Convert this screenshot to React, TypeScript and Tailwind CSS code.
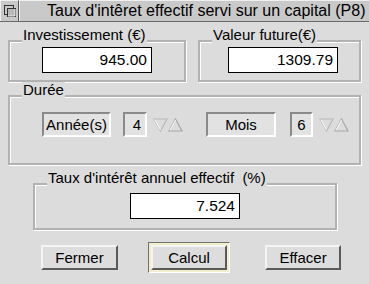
import React from 'react';

const font = { fontFamily: '"Liberation Sans", Arial, sans-serif' };

const Frame = ({ label, className, children }: { label: string; className: string; children: React.ReactNode }) => (
  <div className={`relative border-2 border-[#b2b2b2] shadow-[1px_1px_0_#fff,inset_1px_1px_0_#fff] ${className}`}>
    <span className="absolute -top-[15px] left-[12px] bg-[#dcdcdc] px-[1px] text-[15px] leading-[16px] text-black whitespace-pre">{label}</span>
    {children}
  </div>
);

const Field = ({ value, className = '' }: { value: string; className?: string }) => (
  <div className={`h-[26px] w-[110px] border border-black bg-white pr-[4px] text-right text-[15.5px] leading-[24px] text-black ${className}`}>
    {value}
  </div>
);

const Sunken = ({ text, className }: { text: string; className: string }) => (
  <div className={`h-[25px] border-2 border-t-[#8a8a8a] border-l-[#8a8a8a] border-b-white border-r-white bg-[#e2e2e2] text-center text-[15px] leading-[21px] text-black ${className}`}>
    {text}
  </div>
);

const Arrows = () => (
  <svg width="30" height="16" viewBox="0 0 30 16" className="ml-[6px]">
    <path d="M1 2 L14 2 L7.5 14 Z" fill="#dcdcdc" stroke="#b8b8b8" strokeWidth="1.2" />
    <path d="M1.8 2.6 L7.5 13" stroke="#fff" strokeWidth="1" />
    <path d="M16 14 L29 14 L22.5 2 Z" fill="#dcdcdc" stroke="#a8a8a8" strokeWidth="1.2" />
    <path d="M16.8 13.4 L22.5 3" stroke="#fff" strokeWidth="1" />
  </svg>
);

const Button = ({ label, className = '' }: { label: string; className?: string }) => (
  <div className={`h-[25px] border-2 border-t-[#f4f4f4] border-l-[#f4f4f4] border-b-[#5a5a5a] border-r-[#5a5a5a] bg-[#dddddd] text-center text-[15px] leading-[21px] text-black ${className}`}>
    {label}
  </div>
);

export default function App() {
  return (
    <div className="h-[284px] w-[369px] overflow-hidden bg-[#dcdcdc]" style={font}>
      <div className="flex h-[22px] border-b border-[#6a6a6a] bg-[#c9c9c9]">
        <div className="flex h-[21px] w-[19px] shrink-0 items-center justify-center border-t border-l border-t-[#efefef] border-l-[#efefef] border-r border-r-[#555]">
          <svg width="16" height="16" viewBox="0 0 16 16">
            <rect x="2.5" y="2.5" width="9" height="9" fill="#c9c9c9" stroke="#333" />
            <rect x="5.5" y="5.5" width="8" height="8" fill="#b9b9b9" stroke="#333" />
            <path d="M6 13 L13 13 L13 6" stroke="#eee" fill="none" />
          </svg>
        </div>
        <div className="flex min-w-0 flex-1 items-center border-t border-l border-t-[#efefef] border-l-[#efefef] text-black whitespace-nowrap">
          <span className="ml-[27px] text-[16px] leading-[20px]">Taux d'intêret effectif servi sur un capital (P8)</span>
        </div>
      </div>

      <div className="mt-[18px] flex gap-[12px] px-[8px]">
        <Frame label="Investissement (€)" className="h-[42px] w-[178px]">
          <Field value="945.00" className="ml-[32px] mt-[5px]" />
        </Frame>
        <Frame label="Valeur future(€)" className="h-[42px] flex-1">
          <Field value="1309.79" className="ml-[28px] mt-[5px]" />
        </Frame>
      </div>

      <Frame label="Durée" className="mx-[8px] mt-[13px] h-[70px]">
        <div className="ml-[32px] mt-[15px] flex items-center">
          <Sunken text="Année(s)" className="w-[69px]" />
          <Sunken text="4" className="ml-[12px] w-[24px] pl-[4px]" />
          <Arrows />
          <Sunken text="Mois" className="ml-[23px] w-[70px]" />
          <Sunken text="6" className="ml-[14px] w-[23px]" />
          <Arrows />
        </div>
      </Frame>

      <Frame label="Taux d'intérêt annuel effectif  (%)" className="ml-[33px] mt-[18px] h-[47px] w-[304px]">
        <Field value="7.524" className="ml-[95px] mt-[8px]" />
      </Frame>

      <div className="mt-[12px] flex items-center">
        <Button label="Fermer" className="ml-[41px] w-[77px]" />
        <div className="ml-[30px] border border-t-[#707070] border-l-[#707070] border-b-white border-r-white bg-[#f2eecb] p-[2px]">
          <Button label="Calcul" className="w-[76px]" />
        </div>
        <Button label="Effacer" className="ml-[35px] w-[76px]" />
      </div>
    </div>
  );
}
